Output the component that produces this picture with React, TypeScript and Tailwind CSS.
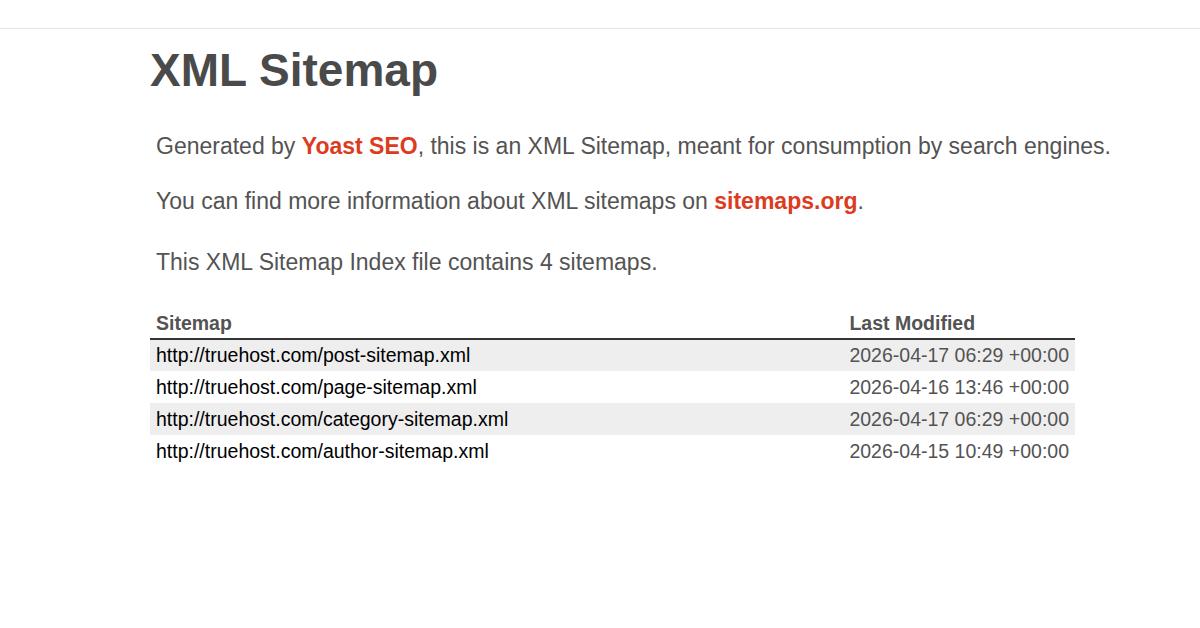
const sitemaps = [
  { url: "http://truehost.com/post-sitemap.xml", mod: "2026-04-17 06:29 +00:00" },
  { url: "http://truehost.com/page-sitemap.xml", mod: "2026-04-16 13:46 +00:00" },
  { url: "http://truehost.com/category-sitemap.xml", mod: "2026-04-17 06:29 +00:00" },
  { url: "http://truehost.com/author-sitemap.xml", mod: "2026-04-15 10:49 +00:00" },
];

export default function App() {
  return (
    <div className="min-h-[628px] bg-white font-['Liberation_Sans',Arial,sans-serif] text-[#545353]">
      <div className="h-[29px] border-b border-[#e6e6e6]" />
      <div className="pl-[150px] w-[1075px]">
        <h1 className="mt-[18px] text-[46px] leading-none font-bold text-[#4a4a4a]">XML Sitemap</h1>

        <div className="pl-[6px] text-[23px] leading-[30px] whitespace-nowrap">
          <p className="mt-[38px]">
            Generated by{" "}
            <a className="font-bold text-[#dd3b1e]">Yoast SEO</a>, this is an XML Sitemap, meant for
            consumption by search engines.
          </p>
          <p className="mt-[25px]">
            You can find more information about XML sitemaps on{" "}
            <a className="font-bold text-[#dd3b1e]">sitemaps.org</a>.
          </p>
          <p className="mt-[31px]">This XML Sitemap Index file contains 4 sitemaps.</p>
        </div>

        <table className="mt-[32px] w-full border-collapse text-[19.5px] whitespace-nowrap">
          <thead>
            <tr className="border-b-2 border-[#333]">
              <th className="h-[28px] px-[6px] text-left font-bold">Sitemap</th>
              <th className="w-[231px] px-[6px] text-left font-bold">Last Modified</th>
            </tr>
          </thead>
          <tbody>
            {sitemaps.map((s, i) => (
              <tr key={s.url} className={i % 2 === 0 ? "bg-[#eeeeee]" : ""}>
                <td className="h-[32px] px-[6px] text-black">{s.url}</td>
                <td className="px-[6px]">{s.mod}</td>
              </tr>
            ))}
          </tbody>
        </table>
      </div>
    </div>
  );
}
